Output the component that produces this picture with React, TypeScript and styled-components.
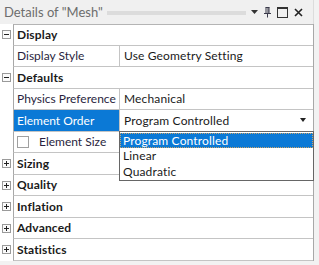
import React from 'react';
import styled, {createGlobalStyle, css} from 'styled-components';

const GlobalStyle = createGlobalStyle`
  body {
    margin: 0;
    background: #f2f2f2;
    font-family: Lato, "Liberation Sans", sans-serif;
  }
`;

type Section = {
    title: string
    open: boolean
}

const Panel = styled.div`
  width: 314px;
  display: flex;
  flex-direction: column;
`;

const TitleBar = styled.div`
  height: 24px;
  display: flex;
  align-items: center;
  padding-left: 4px;
  background: #f0f0f0;
  border-right: 1px solid #dcdcdc;
  box-sizing: border-box;
`;

const Title = styled.span`
  font-size: 13px;
  color: #6d6d6d;
  white-space: nowrap;
`;

const Grip = styled.div`
  flex: 1;
  height: 4px;
  margin: 1px 5px 0 4px;
  background-image: radial-gradient(#c4c4c4 0.6px, transparent 0.8px);
  background-size: 2px 2px;
`;

const TitleIcons = styled.div`
  display: flex;
  align-items: center;
  gap: 6px;
  padding-right: 10px;
`;

const Body = styled.div`
  background: #fff;
  border-right: 1px solid #a8a8a8;
  display: flex;
  flex-direction: column;
`;

const Row = styled.div<{ $first?: boolean }>`
  display: flex;
  height: 21.5px;
  ${({$first}) => $first && css`
    & > div:last-child { border-top: 1px solid #b4b4b4; }
  `}
`;

const Gutter = styled.div`
  width: 13px;
  flex: none;
  display: flex;
  align-items: center;
  justify-content: center;
`;

const Toggle = styled.div`
  width: 7px;
  height: 7px;
  border: 1px solid #9a9a9a;
  background: #fafafa;
  position: relative;
  &::before {
    content: "";
    position: absolute;
    left: 1px;
    right: 1px;
    top: 3px;
    height: 1px;
    background: #222;
  }
`;

const PlusToggle = styled(Toggle)`
  &::after {
    content: "";
    position: absolute;
    top: 1px;
    bottom: 1px;
    left: 3px;
    width: 1px;
    background: #222;
  }
`;

const Cells = styled.div`
  flex: 1;
  display: flex;
  border-left: 1px solid #a8a8a8;
  border-bottom: 1px solid #c4c4c4;
  min-width: 0;
`;

const HeaderText = styled.div`
  padding-left: 3px;
  display: flex;
  align-items: center;
  font-size: 12px;
  font-weight: 700;
  letter-spacing: 0.15px;
  color: #1a1a1a;
`;

const NameCell = styled.div<{ $selected?: boolean }>`
  width: 106px;
  flex: none;
  display: flex;
  align-items: center;
  gap: 10px;
  padding-left: 3px;
  box-sizing: border-box;
  border-right: 1px solid #c4c4c4;
  font-size: 12px;
  white-space: nowrap;
  overflow: hidden;
  color: ${({$selected}) => ($selected ? '#fff' : '#2a1f40')};
  background: ${({$selected}) => ($selected ? '#0b79d6' : 'transparent')};
`;

const ValueCell = styled.div`
  flex: 1;
  display: flex;
  align-items: center;
  padding-left: 4px;
  font-size: 12px;
  letter-spacing: 0.15px;
  color: #1a1a1a;
  white-space: nowrap;
  position: relative;
`;

const CheckBox = styled.div`
  width: 10px;
  height: 10px;
  border: 1px solid #a0a0a0;
  background: #fff;
  flex: none;
`;

const ComboValue = styled.div`
  flex: 1;
`;

const Arrow = styled.div`
  width: 0;
  height: 0;
  border-left: 3.5px solid transparent;
  border-right: 3.5px solid transparent;
  border-top: 4px solid #222;
  margin-right: 7px;
`;

const DropList = styled.div`
  position: absolute;
  top: 100%;
  left: -1px;
  right: -1px;
  background: #fff;
  border: 1px solid #666;
  z-index: 5;
  padding-top: 1px;
  padding-bottom: 1px;
`;

const DropItem = styled.div<{ $active?: boolean }>`
  height: 15.5px;
  line-height: 15px;
  padding-left: 3px;
  font-size: 12px;
  letter-spacing: 0.15px;
  box-sizing: border-box;
  color: ${({$active}) => ($active ? '#fff' : '#1a1a1a')};
  background: ${({$active}) => ($active ? '#0b79d6' : 'transparent')};
  outline: ${({$active}) => ($active ? '1px dotted #c9a36a' : 'none')};
  outline-offset: -1px;
`;

const collapsed: Section[] = [
    {title: 'Sizing', open: false},
    {title: 'Quality', open: false},
    {title: 'Inflation', open: false},
    {title: 'Advanced', open: false},
    {title: 'Statistics', open: false},
];

const options = ['Program Controlled', 'Linear', 'Quadratic'];

const Header = ({title, open, first}: Section & { first?: boolean }) => (
    <Row $first={first}>
        <Gutter>{open ? <Toggle/> : <PlusToggle/>}</Gutter>
        <Cells><HeaderText>{title}</HeaderText></Cells>
    </Row>
);

const App = () => {
    return (
        <>
            <GlobalStyle/>
            <Panel>
                <TitleBar>
                    <Title>Details of "Mesh"</Title>
                    <Grip/>
                    <TitleIcons>
                        <svg width="7" height="4" viewBox="0 0 7 4"><path d="M0 0h7L3.5 4z" fill="#333"/></svg>
                        <svg width="7" height="11" viewBox="0 0 7 11">
                            <path d="M1.5 0.5h4M2 0.5v6M5 0.5v6M0 6.5h7M3.5 6.5v4" stroke="#3a3a4a" strokeWidth="1" fill="none"/>
                            <path d="M4 1v5" stroke="#3a3a4a" strokeWidth="1"/>
                        </svg>
                        <svg width="11" height="11" viewBox="0 0 11 11">
                            <rect x="0.5" y="0.5" width="10" height="10" fill="none" stroke="#333" strokeWidth="1"/>
                            <path d="M0.5 1.5h10" stroke="#333" strokeWidth="1"/>
                        </svg>
                        <svg width="9" height="9" viewBox="0 0 9 9">
                            <path d="M1 1l7 7M8 1l-7 7" stroke="#222" strokeWidth="1.6"/>
                        </svg>
                    </TitleIcons>
                </TitleBar>
                <Body>
                    <Header title="Display" open first/>
                    <Row>
                        <Gutter/>
                        <Cells>
                            <NameCell>Display Style</NameCell>
                            <ValueCell>Use Geometry Setting</ValueCell>
                        </Cells>
                    </Row>
                    <Header title="Defaults" open/>
                    <Row>
                        <Gutter/>
                        <Cells>
                            <NameCell>Physics Preference</NameCell>
                            <ValueCell>Mechanical</ValueCell>
                        </Cells>
                    </Row>
                    <Row>
                        <Gutter/>
                        <Cells>
                            <NameCell $selected>Element Order</NameCell>
                            <ValueCell>
                                <ComboValue>Program Controlled</ComboValue>
                                <Arrow/>
                                <DropList>
                                    {options.map((o, i) => (
                                        <DropItem key={o} $active={i === 0}>{o}</DropItem>
                                    ))}
                                </DropList>
                            </ValueCell>
                        </Cells>
                    </Row>
                    <Row>
                        <Gutter/>
                        <Cells>
                            <NameCell><CheckBox/>Element Size</NameCell>
                            <ValueCell/>
                        </Cells>
                    </Row>
                    {collapsed.map((s) => <Header key={s.title} {...s}/>)}
                </Body>
            </Panel>
        </>
    );
};

export default App;
